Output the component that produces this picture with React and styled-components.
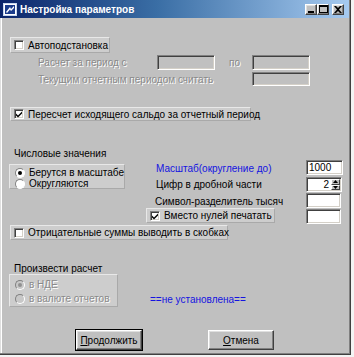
import React from 'react'
import styled, { createGlobalStyle, css } from 'styled-components'

const Global = createGlobalStyle`
	html, body {
		margin: 0;
		padding: 0;
		background: #f4f4f4;
	}
	* {
		box-sizing: border-box;
	}
`

const sunken = css`
	border-style: solid;
	border-width: 1px;
	border-color: #808080 #ffffff #ffffff #808080;
	box-shadow: inset 1px 1px 0 #404040, inset -1px -1px 0 #d4d0c8;
`

const raised = css`
	border-style: solid;
	border-width: 1px;
	border-color: #ffffff #404040 #404040 #ffffff;
	box-shadow: inset -1px -1px 0 #808080, inset 1px 1px 0 #dfdfdf;
`

const Window = styled.div`
	width: 351px;
	height: 355px;
	background: #c0c0c0;
	font-family: 'Liberation Sans', Arial, sans-serif;
	font-size: 10px;
	color: #000;
	display: flex;
	flex-direction: column;
	box-shadow: inset -1px -1px 0 #404040, inset -2px -2px 0 #808080, inset 1px 0 0 #dfdfdf, inset 2px 0 0 #ffffff;
`

const TitleBar = styled.div`
	height: 18px;
	margin-right: 2px;
	display: flex;
	align-items: center;
	padding: 0 3px 0 3px;
	background: linear-gradient(to right, #0a246a 0%, #3a6ea5 45%, #a6caf0 100%);
`

const TitleText = styled.span`
	flex: 1;
	margin-left: 3px;
	color: #fff;
	font-weight: bold;
	font-size: 10px;
	white-space: nowrap;
`

const TitleButtons = styled.div`
	display: flex;
	margin-right: 2px;
`

const TitleButton = styled.div`
	width: 12px;
	height: 11px;
	background: #c0c0c0;
	${raised};
	display: flex;
	align-items: center;
	justify-content: center;
	margin-left: ${(p) => (p.$gap ? '3px' : '0')};
`

const Body = styled.div`
	display: flex;
	flex-direction: column;
`

const Line = styled.div`
	display: flex;
	align-items: center;
	height: ${(p) => p.$h}px;
	margin-top: ${(p) => p.$top}px;
`

const Label = styled.span`
	display: block;
	white-space: nowrap;
	margin-left: ${(p) => p.$ml || 0}px;
	width: ${(p) => (p.$w ? p.$w + 'px' : 'auto')};
	flex-shrink: 0;
	${(p) =>
		p.$disabled &&
		css`
			color: #8a8a8a;
			text-shadow: 1px 1px 0 #ffffff;
		`}
	${(p) =>
		p.$blue &&
		css`
			color: #1414e0;
		`}
`

const Input = styled.div`
	width: ${(p) => p.$w}px;
	height: ${(p) => p.$h || 15}px;
	flex-shrink: 0;
	background: ${(p) => (p.$disabled ? '#c0c0c0' : '#ffffff')};
	${sunken};
	display: flex;
	align-items: center;
	padding: 0 2px;
	font-size: 10px;
`

const Panel = styled.label`
	display: flex;
	align-items: center;
	gap: 4px;
	margin-left: ${(p) => p.$ml || 0}px;
	width: ${(p) => p.$w}px;
	height: ${(p) => p.$h || 15}px;
	padding-left: 3px;
	background: #cdcdcd;
	border: 1px solid;
	border-color: #e8e8e8 #a9a9a9 #a9a9a9 #e8e8e8;
	white-space: nowrap;
	flex-shrink: 0;
`

const Box = styled.span`
	width: 10px;
	height: 10px;
	flex-shrink: 0;
	background: #fff;
	${sunken};
	display: flex;
	align-items: center;
	justify-content: center;
`

const Round = styled.span`
	width: 10px;
	height: 10px;
	flex-shrink: 0;
	border-radius: 50%;
	background: ${(p) => (p.$disabled ? '#c8c8c8' : '#fff')};
	border: 1px solid;
	border-color: #808080 #ffffff #ffffff #808080;
	display: flex;
	align-items: center;
	justify-content: center;
	&::after {
		content: '';
		display: ${(p) => (p.$on ? 'block' : 'none')};
		width: 4px;
		height: 4px;
		border-radius: 50%;
		background: ${(p) => (p.$disabled ? '#909090' : '#000')};
	}
`

const RadioGroup = styled.div`
	display: flex;
	flex-direction: column;
	margin-left: ${(p) => p.$ml || 0}px;
	width: ${(p) => p.$w}px;
	height: ${(p) => p.$h}px;
	padding: ${(p) => p.$pad || 2}px 0 0 5px;
	background: #cdcdcd;
	border: 1px solid;
	border-color: #e8e8e8 #a9a9a9 #a9a9a9 #e8e8e8;
	flex-shrink: 0;
`

const RadioRow = styled.div`
	display: flex;
	align-items: center;
	gap: 4px;
	height: ${(p) => p.$h || 11}px;
	white-space: nowrap;
`

const Grid = styled.div`
	display: grid;
	margin-top: 1px;
	grid-template-columns: 9px 116px 181px 37px;
	grid-template-rows: 16px 17px 16px 15px 16px;
`

const Cell = styled.div`
	grid-column: ${(p) => p.$col};
	grid-row: ${(p) => p.$row};
	align-self: ${(p) => p.$align || 'center'};
	margin-top: ${(p) => p.$mt || 0}px;
	display: flex;
	align-items: center;
`

const Spin = styled.div`
	width: 36px;
	height: 15px;
	background: #fff;
	${sunken};
	display: flex;
	justify-content: flex-end;
	align-items: stretch;
	padding: 1px;
`

const SpinValue = styled.span`
	flex: 1;
	text-align: right;
	padding-right: 2px;
	line-height: 11px;
`

const SpinButtons = styled.div`
	width: 9px;
	display: flex;
	flex-direction: column;
`

const SpinButton = styled.div`
	flex: 1;
	background: #c0c0c0;
	border: 1px solid;
	border-color: #fff #404040 #404040 #fff;
	display: flex;
	align-items: center;
	justify-content: center;
`

const Buttons = styled.div`
	display: flex;
	margin-top: 23px;
	padding-left: 76px;
	gap: 66px;
`

const Button = styled.div`
	width: 66px;
	height: 20px;
	background: #c0c0c0;
	display: flex;
	align-items: center;
	justify-content: center;
	font-size: 10px;
	${raised};
	${(p) =>
		p.$default &&
		css`
			outline: 1px solid #000;
		`}
	u {
		text-decoration: underline;
	}
`

const Check = () => (
	<svg width="8" height="8" viewBox="0 0 8 8">
		<path d="M1 3.5 L3 5.5 L7 1.5 L7 3.5 L3 7.5 L1 5.5 Z" fill="#000" />
	</svg>
)

const CheckPanel = ({ checked, children, ...rest }) => (
	<Panel {...rest}>
		<Box>{checked && <Check />}</Box>
		<span>{children}</span>
	</Panel>
)

const AppIcon = () => (
	<svg width="14" height="13" viewBox="0 0 14 13">
		<rect x="0.5" y="0.5" width="13" height="12" fill="#ffffff" stroke="#c8d8f0" />
		<rect x="2" y="2" width="10" height="9" fill="#1a3c8c" />
		<path d="M3 9 L7 4 L8 6 L11 3 L11 5 L8 8 L7 6.5 L4 10 Z" fill="#ffffff" />
	</svg>
)

export default function App() {
	return (
		<>
			<Global />
			<Window>
				<TitleBar>
					<AppIcon />
					<TitleText>Настройка параметров</TitleText>
					<TitleButtons>
						<TitleButton>
							<svg width="8" height="8" viewBox="0 0 8 8">
								<rect x="1" y="6" width="6" height="2" fill="#000" />
							</svg>
						</TitleButton>
						<TitleButton>
							<svg width="9" height="8" viewBox="0 0 9 8">
								<rect x="0.5" y="0.5" width="8" height="7" fill="none" stroke="#000" />
								<rect x="0" y="0" width="9" height="2" fill="#000" />
							</svg>
						</TitleButton>
						<TitleButton $gap>
							<svg width="8" height="7" viewBox="0 0 8 7">
								<path d="M0 0 L2 0 L4 2 L6 0 L8 0 L5 3.5 L8 7 L6 7 L4 5 L2 7 L0 7 L3 3.5 Z" fill="#000" />
							</svg>
						</TitleButton>
					</TitleButtons>
				</TitleBar>

				<Body>
					<Line $top={19} $h={16}>
						<CheckPanel $ml={10} $w={100} $h={16}>
							Автоподстановка
						</CheckPanel>
					</Line>

					<Line $top={2} $h={15}>
						<Label $ml={38} $w={119} $disabled>
							Расчет за период с
						</Label>
						<Input $w={58} $disabled />
						<Label $ml={14} $w={23} $disabled>
							по
						</Label>
						<Input $w={58} $disabled />
					</Line>

					<Line $top={2} $h={14}>
						<Label $ml={38} $w={214} $disabled>
							Текущим отчетным периодом считать
						</Label>
						<Input $w={58} $h={14} $disabled />
					</Line>

					<Line $top={21} $h={14}>
						<CheckPanel $ml={10} $w={241} $h={14} checked>
							Пересчет исходящего сальдо за отчетный период
						</CheckPanel>
					</Line>

					<Line $top={26} $h={12}>
						<Label $ml={14}>Числовые значения</Label>
					</Line>

					<Grid>
						<Cell $col="2" $row="1 / 3" $align="start" $mt={4}>
							<RadioGroup $w={116} $h={25} $pad={2}>
								<RadioRow>
									<Round $on />
									<span>Берутся в масштабе</span>
								</RadioRow>
								<RadioRow>
									<Round />
									<span>Округляются</span>
								</RadioRow>
							</RadioGroup>
						</Cell>

						<Cell $col="3" $row="1">
							<Label $ml={31} $blue>
								Масштаб(округление до)
							</Label>
						</Cell>
						<Cell $col="4" $row="1" $align="start">
							<Input $w={37}>1000</Input>
						</Cell>

						<Cell $col="3" $row="2">
							<Label $ml={31}>Цифр в дробной части</Label>
						</Cell>
						<Cell $col="4" $row="2">
							<Spin>
								<SpinValue>2</SpinValue>
								<SpinButtons>
									<SpinButton>
										<svg width="5" height="3" viewBox="0 0 5 3">
											<path d="M0 3 L2.5 0 L5 3 Z" fill="#000" />
										</svg>
									</SpinButton>
									<SpinButton>
										<svg width="5" height="3" viewBox="0 0 5 3">
											<path d="M0 0 L2.5 3 L5 0 Z" fill="#000" />
										</svg>
									</SpinButton>
								</SpinButtons>
							</Spin>
						</Cell>

						<Cell $col="3" $row="3">
							<Label $ml={30}>Символ-разделитель тысяч</Label>
						</Cell>
						<Cell $col="4" $row="3" $align="start">
							<Input $w={35} />
						</Cell>

						<Cell $col="3" $row="4" $align="start" $mt={-1}>
							<CheckPanel $ml={21} $w={129} $h={15} checked>
								Вместо нулей печатать
							</CheckPanel>
						</Cell>
						<Cell $col="4" $row="4" $align="start">
							<Input $w={35} />
						</Cell>

						<Cell $col="1 / 4" $row="5" $align="end">
							<CheckPanel $ml={10} $w={218} $h={15}>
								Отрицательные суммы выводить в скобках
							</CheckPanel>
						</Cell>
					</Grid>

					<Line $top={22} $h={12}>
						<Label $ml={14}>Произвести расчет</Label>
					</Line>

					<Line $top={0} $h={33}>
						<RadioGroup $ml={9} $w={109} $h={33} $pad={3}>
							<RadioRow $h={13}>
								<Round $on $disabled />
								<Label $disabled>в НДЕ</Label>
							</RadioRow>
							<RadioRow $h={15}>
								<Round $disabled />
								<Label $disabled>в валюте отчетов</Label>
							</RadioRow>
						</RadioGroup>
						<Label $ml={32} $blue style={{ alignSelf: 'flex-end', marginBottom: 2 }}>
							==не установлена==
						</Label>
					</Line>

					<Buttons>
						<Button $default>
							<span>
								<u>П</u>родолжить
							</span>
						</Button>
						<Button>
							<span>
								<u>О</u>тмена
							</span>
						</Button>
					</Buttons>
				</Body>
			</Window>
		</>
	)
}
